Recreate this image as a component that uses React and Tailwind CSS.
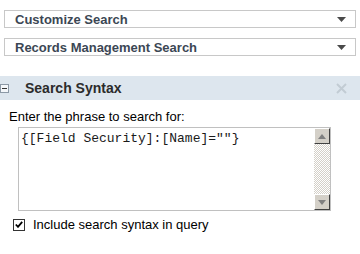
import React from "react";

function Dropdown({ label }) {
  return (
    <div className="h-[18px] border border-[#c8c8c8] flex items-center justify-between pl-[10px] pr-[9px]">
      <span className="text-[13px] font-bold text-[#3c4754] leading-none">{label}</span>
      <svg width="9" height="5" viewBox="0 0 9 5"><path d="M0 0h9L4.5 5z" fill="#4a4a4a" /></svg>
    </div>
  );
}

function ScrollBtn({ up }) {
  return (
    <div className="w-[16px] h-[16px] bg-[#d4d0c8] border-t border-l border-t-white border-l-white border-r border-b border-r-[#404040] border-b-[#404040] flex items-center justify-center">
      <svg width="8" height="5" viewBox="0 0 8 5">
        {up ? <path d="M0 5h8L4 0z" fill="#808080" /> : <path d="M0 0h8L4 5z" fill="#808080" />}
      </svg>
    </div>
  );
}

export default function App() {
  return (
    <div className="w-[360px] h-[254px] bg-white font-['Liberation_Sans',Arial,sans-serif] overflow-hidden">
      <div className="pt-[10px] px-[4px] flex flex-col gap-[10px]">
        <Dropdown label="Customize Search" />
        <Dropdown label="Records Management Search" />
      </div>
      <div className="mt-[20px] h-[24px] bg-[#dde6ee] flex items-center justify-between pr-[13px]">
        <div className="flex items-center">
          <div className="w-[9px] h-[9px] border border-[#8c99a6] bg-[#f4f7fa] flex items-center justify-center">
            <div className="w-[5px] h-px bg-[#333]" />
          </div>
          <span className="ml-[16px] text-[14px] font-bold text-[#2b2b2b]">Search Syntax</span>
        </div>
        <svg width="11" height="11" viewBox="0 0 11 11">
          <path d="M1 1L10 10M10 1L1 10" stroke="#c2ccd4" strokeWidth="2" />
        </svg>
      </div>
      <div className="pl-[9px] pt-[9px] text-[13px] text-black leading-[15px]">Enter the phrase to search for:</div>
      <div className="ml-[18px] mt-[3px] w-[313px] h-[84px] border border-[#c0c0c0] flex">
        <div className="flex-1 pl-[2px] pt-[3px] font-['Liberation_Mono','Courier_New',monospace] text-[13px] leading-[15px] text-[#1a1a1a] whitespace-pre">{'{[Field Security]:[Name]=""}'}</div>
        <div className="w-[16px] flex flex-col">
          <ScrollBtn up />
          <div className="flex-1 bg-[repeating-conic-gradient(#d4d0c8_0_25%,#ffffff_0_50%)] bg-[length:2px_2px]" />
          <ScrollBtn />
        </div>
      </div>
      <label className="flex items-center ml-[13px] mt-[6px]">
        <div className="w-[12px] h-[12px] border border-[#333] bg-white flex items-center justify-center">
          <svg width="8" height="7" viewBox="0 0 8 7"><path d="M0.8 3.5L3 5.8L7.2 0.8" stroke="#000" strokeWidth="1.8" fill="none" /></svg>
        </div>
        <span className="ml-[8px] text-[13px] text-black leading-[15px]">Include search syntax in query</span>
      </label>
    </div>
  );
}
